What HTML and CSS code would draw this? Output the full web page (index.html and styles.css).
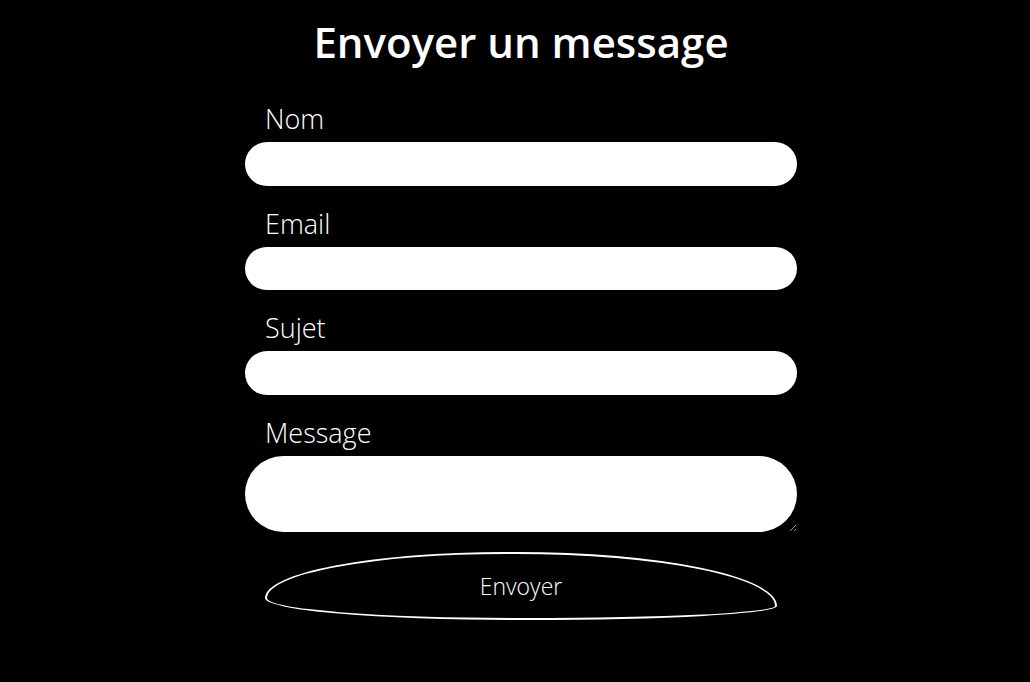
FILE: index.html
```html
<!DOCTYPE html>
<html lang="fr">
<head>
<meta charset="utf-8">
<title>Contact</title>
<link rel="stylesheet" href="styles.css">
</head>
<body>
<main class="page">
  <h1 class="title">Envoyer un message</h1>
  <form class="form">
    <div class="field">
      <label class="label" for="nom">Nom</label>
      <input class="input" id="nom" type="text">
    </div>
    <div class="field">
      <label class="label" for="email">Email</label>
      <input class="input" id="email" type="email">
    </div>
    <div class="field">
      <label class="label" for="sujet">Sujet</label>
      <input class="input" id="sujet" type="text">
    </div>
    <div class="field">
      <label class="label" for="message">Message</label>
      <textarea class="textarea" id="message"></textarea>
    </div>
    <button class="button" type="button">Envoyer</button>
  </form>
</main>
</body>
</html>
```
FILE: styles.css
```css
html, body {
  margin: 0;
  padding: 0;
  background: #000;
  color: #fff;
  font-family: "Open Sans", "Noto Sans", sans-serif;
}
.page {
  width: 564px;
  margin: 0 auto;
  padding-left: 12px;
  box-sizing: border-box;
}
.title {
  margin: 0;
  height: 84px;
  line-height: 84px;
  font-size: 42px;
  font-weight: 600;
  text-align: center;
}
.form {
  display: flex;
  flex-direction: column;
  padding-top: 20px;
}
.field {
  display: flex;
  flex-direction: column;
  margin-bottom: 23px;
}
.field:last-of-type {
  margin-bottom: 20px;
}
.label {
  display: block;
  height: 30px;
  line-height: 30px;
  font-size: 27px;
  font-weight: 300;
  padding-left: 20px;
  margin-bottom: 8px;
}
.input, .textarea {
  display: block;
  width: 100%;
  box-sizing: border-box;
  border: none;
  background: #fff;
  outline: none;
  margin: 0;
  font-family: inherit;
}
.input {
  height: 43.5px;
  border-radius: 22px;
}
.textarea {
  height: 76px;
  border-radius: 40px;
}
.button {
  margin: 0 20px;
  height: 68px;
  background: transparent;
  color: #fff;
  border: 2px solid #fff;
  border-radius: 240px 260px 250px 250px / 46px 54px 14px 22px;
  font-family: inherit;
  font-size: 23px;
  font-weight: 300;
  cursor: pointer;
}
```
